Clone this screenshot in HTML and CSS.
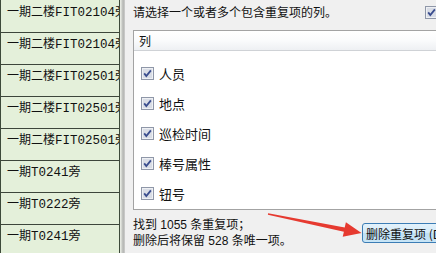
FILE: index.html
```html
<!DOCTYPE html>
<html>
<head>
<meta charset="utf-8">
<link rel="stylesheet" href="styles.css">
</head>
<body>
<div class="screen">
  <div class="grid">
    <div class="row">一期二楼<span class="lat">FIT02104</span>旁</div>
    <div class="row">一期二楼<span class="lat">FIT02104</span>旁</div>
    <div class="row">一期二楼<span class="lat">FIT02501</span>旁</div>
    <div class="row">一期二楼<span class="lat">FIT02501</span>旁</div>
    <div class="row">一期二楼<span class="lat">FIT02501</span>旁</div>
    <div class="row">一期<span class="lat">T0241</span>旁</div>
    <div class="row">一期<span class="lat">T0222</span>旁</div>
    <div class="row">一期<span class="lat">T0241</span>旁</div>
  </div>
  <div class="splitter"></div>
  <div class="dialog">
    <div class="titlebar">
      <div class="title">请选择一个或者多个包含重复项的列。</div>
      <div class="hdrcheck">
        <svg class="cb" viewBox="0 0 13 13" width="13" height="13"><rect x="0.5" y="0.5" width="12" height="12" fill="#eef0f4" stroke="#8f97a8"/><rect x="2" y="2" width="9" height="9" fill="#d9dde6"/><path d="M3.2 6.4 L5.3 9 L9.9 3.4" fill="none" stroke="#3a4d8e" stroke-width="1.8"/></svg>
        <span>我的数据包含标题(M)</span>
      </div>
    </div>
    <div class="groupbox">
      <div class="colhead">列</div>
      <div class="items">
        <div class="item"><svg class="cb" viewBox="0 0 13 13" width="13" height="13"><rect x="0.5" y="0.5" width="12" height="12" fill="#eef0f4" stroke="#8f97a8"/><rect x="2" y="2" width="9" height="9" fill="#d9dde6"/><path d="M3.2 6.4 L5.3 9 L9.9 3.4" fill="none" stroke="#3a4d8e" stroke-width="1.8"/></svg><span>人员</span></div>
        <div class="item"><svg class="cb" viewBox="0 0 13 13" width="13" height="13"><rect x="0.5" y="0.5" width="12" height="12" fill="#eef0f4" stroke="#8f97a8"/><rect x="2" y="2" width="9" height="9" fill="#d9dde6"/><path d="M3.2 6.4 L5.3 9 L9.9 3.4" fill="none" stroke="#3a4d8e" stroke-width="1.8"/></svg><span>地点</span></div>
        <div class="item"><svg class="cb" viewBox="0 0 13 13" width="13" height="13"><rect x="0.5" y="0.5" width="12" height="12" fill="#eef0f4" stroke="#8f97a8"/><rect x="2" y="2" width="9" height="9" fill="#d9dde6"/><path d="M3.2 6.4 L5.3 9 L9.9 3.4" fill="none" stroke="#3a4d8e" stroke-width="1.8"/></svg><span>巡检时间</span></div>
        <div class="item"><svg class="cb" viewBox="0 0 13 13" width="13" height="13"><rect x="0.5" y="0.5" width="12" height="12" fill="#eef0f4" stroke="#8f97a8"/><rect x="2" y="2" width="9" height="9" fill="#d9dde6"/><path d="M3.2 6.4 L5.3 9 L9.9 3.4" fill="none" stroke="#3a4d8e" stroke-width="1.8"/></svg><span>棒号属性</span></div>
        <div class="item"><svg class="cb" viewBox="0 0 13 13" width="13" height="13"><rect x="0.5" y="0.5" width="12" height="12" fill="#eef0f4" stroke="#8f97a8"/><rect x="2" y="2" width="9" height="9" fill="#d9dde6"/><path d="M3.2 6.4 L5.3 9 L9.9 3.4" fill="none" stroke="#3a4d8e" stroke-width="1.8"/></svg><span>钮号</span></div>
      </div>
    </div>
    <div class="footer">
      <div class="summary">
        <div>找到 1055 条重复项；</div>
        <div>删除后将保留 528 条唯一项。</div>
      </div>
      <button class="btn">删除重复项 (<u>D</u>)</button>
    </div>
  </div>
  <svg class="arrow" viewBox="0 0 436 253" width="436" height="253">
    <polygon points="268.1,213.3 344.7,227.4 345.9,222.2 361.5,233 342.7,236.8 343.9,231.8 267.9,214.7" fill="#e63a30"/>
  </svg>
</div>
</body>
</html>
```
FILE: styles.css
```css
html, body {
  margin: 0;
  padding: 0;
}
body {
  width: 436px;
  height: 253px;
  overflow: hidden;
  background: #f0f0f0;
}
.screen {
  position: relative;
  display: flex;
  width: 436px;
  height: 253px;
  overflow: hidden;
}
.grid {
  flex: 0 0 118px;
  width: 118px;
  height: 253px;
  overflow: hidden;
  background: #e4f0da;
  border-left: 1px solid #3d4a3a;
  border-right: 1px solid #3d4a3a;
  padding-top: 1px;
  box-sizing: content-box;
  font-family: "Noto Sans CJK SC", sans-serif;
  font-size: 12px;
  color: #111;
}
.row {
  height: 31px;
  border-bottom: 1px solid #3d463b;
  line-height: 20px;
  padding-left: 6px;
  white-space: nowrap;
  overflow: hidden;
}
.lat {
  font-family: "Liberation Mono", monospace;
  font-size: 12.5px;
}
.splitter {
  flex: 0 0 5px;
  background: linear-gradient(to right, #e6e9e2 0px, #e6e9e2 1px, #c4c6c2 2px, #b5b6b4 4px, #dadada 5px);
}
.dialog {
  flex: 0 0 340px;
  padding-left: 8px;
  font-family: "Noto Sans CJK SC", sans-serif;
  font-size: 12px;
  color: #111;
  background: #f0f0f0;
}
.titlebar {
  display: flex;
  height: 30px;
  align-items: flex-start;
}
.title {
  flex: 0 0 292px;
  line-height: 24px;
}
.hdrcheck {
  display: flex;
  align-items: center;
  gap: 4px;
  margin-top: 4px;
  white-space: nowrap;
}
.cb {
  display: block;
  flex: 0 0 13px;
}
.groupbox {
  width: 330px;
  background: #ffffff;
  border: 1px solid #a3a3a3;
  border-right: none;
}
.colhead {
  height: 19px;
  line-height: 19px;
  padding-left: 5px;
  font-size: 12px;
  background: linear-gradient(to bottom, #ffffff 0%, #fafbfc 50%, #eef0f3 100%);
  border-bottom: 1px solid #cfd2d6;
}
.items {
  padding: 7px 0 1px 7px;
}
.item {
  display: flex;
  align-items: center;
  gap: 5px;
  height: 30px;
  font-size: 13px;
}
.footer {
  display: flex;
  align-items: center;
  margin-top: 7px;
}
.summary {
  flex: 0 0 229px;
  font-family: "Liberation Sans", "Noto Sans CJK SC", sans-serif;
  font-size: 12px;
  line-height: 16px;
  white-space: nowrap;
}
.btn {
  flex: 0 0 96px;
  height: 20px;
  padding: 0 0 0 3px;
  margin: 0;
  text-align: left;
  font-family: "Noto Sans CJK SC", sans-serif;
  font-size: 12px;
  line-height: 17px;
  color: #111;
  border: 1px solid #3c7db5;
  border-radius: 3px;
  background: linear-gradient(to bottom, #e3f2fb 0%, #d3eaf8 50%, #bedff4 51%, #c8e5f6 100%);
  white-space: nowrap;
}
.btn u {
  text-decoration: none;
}
.arrow {
  position: absolute;
  left: 0;
  top: 0;
  pointer-events: none;
}
```
